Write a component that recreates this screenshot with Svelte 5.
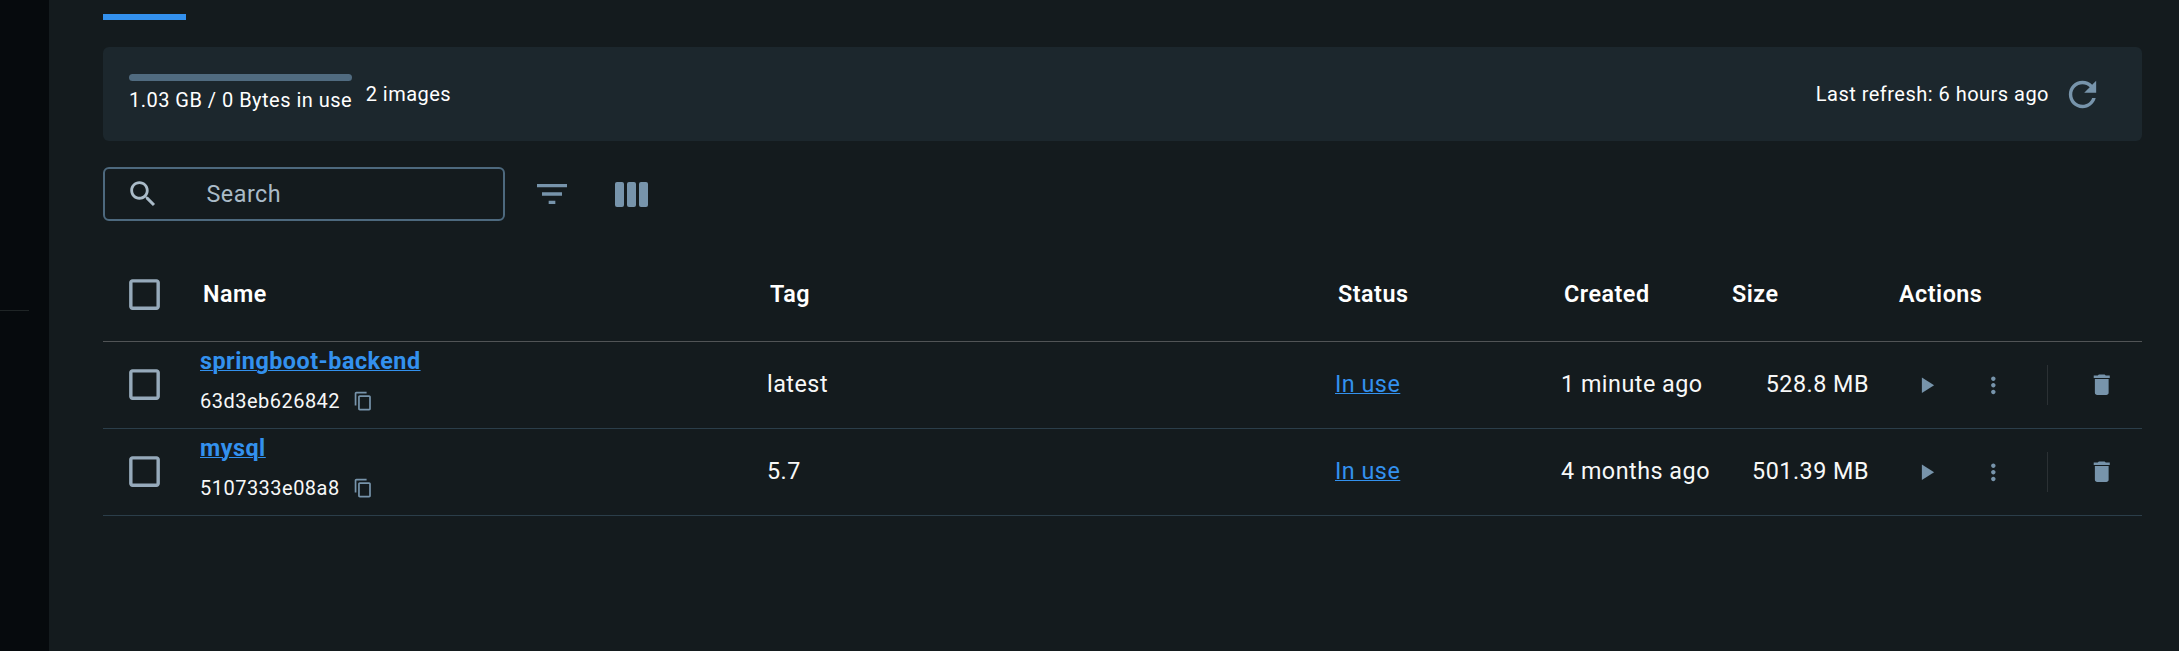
<script>
  const images = [
    { name: 'springboot-backend', id: '63d3eb626842', tag: 'latest', status: 'In use', created: '1 minute ago', size: '528.8 MB' },
    { name: 'mysql', id: '5107333e08a8', tag: '5.7', status: 'In use', created: '4 months ago', size: '501.39 MB' }
  ];
  const columns = ['Name', 'Tag', 'Status', 'Created', 'Size', 'Actions'];

  const icons = {
    search: 'M15.5 14h-.79l-.28-.27C15.41 12.59 16 11.11 16 9.5 16 5.91 13.09 3 9.5 3S3 5.91 3 9.5 5.91 16 9.5 16c1.61 0 3.09-.59 4.23-1.57l.27.28v.79l5 4.99L20.49 19l-4.99-5zm-6 0C7.01 14 5 11.99 5 9.5S7.01 5 9.5 5 14 7.01 14 9.5 11.99 14 9.5 14z',
    refresh: 'M17.65 6.35C16.2 4.9 14.21 4 12 4c-4.42 0-7.99 3.58-7.99 8s3.57 8 7.99 8c3.73 0 6.84-2.55 7.73-6h-2.08c-.82 2.33-3.04 4-5.65 4-3.31 0-6-2.69-6-6s2.69-6 6-6c1.66 0 3.14.69 4.22 1.78L13 11h7V4l-2.35 2.35z',
    filter: 'M10 18h4v-2h-4v2zM3 6v2h18V6H3zm3 7h12v-2H6v2z',
    box: 'M19 5v14H5V5h14m0-2H5c-1.1 0-2 .9-2 2v14c0 1.1.9 2 2 2h14c1.1 0 2-.9 2-2V5c0-1.1-.9-2-2-2z',
    copy: 'M16 1H4c-1.1 0-2 .9-2 2v14h2V3h12V1zm3 4H8c-1.1 0-2 .9-2 2v14c0 1.1.9 2 2 2h11c1.1 0 2-.9 2-2V7c0-1.1-.9-2-2-2zm0 16H8V7h11v14z',
    play: 'M8 5v14l11-7z',
    more: 'M12 8c1.1 0 2-.9 2-2s-.9-2-2-2-2 .9-2 2 .9 2 2 2zm0 2c-1.1 0-2 .9-2 2s.9 2 2 2 2-.9 2-2-.9-2-2-2zm0 6c-1.1 0-2 .9-2 2s.9 2 2 2 2-.9 2-2-.9-2-2-2z',
    trash: 'M6 19c0 1.1.9 2 2 2h8c1.1 0 2-.9 2-2V7H6v12zM19 4h-3.5l-1-1h-5l-1 1H5v2h14V4z'
  };
</script>

{#snippet icon(name, size)}
  <svg class="icon" width={size} height={size} viewBox="0 0 24 24" aria-hidden="true"><path d={icons[name]} /></svg>
{/snippet}

<div class="app">
  <aside class="sidebar"><div class="rule"></div></aside>
  <main>
    <div class="tab"></div>

    <section class="summary">
      <div class="usage">
        <div class="bar"></div>
        <span>1.03 GB / 0 Bytes in use</span>
      </div>
      <span class="count">2 images</span>
      <span class="last">Last refresh: 6 hours ago</span>
      <div class="refresh">{@render icon('refresh', 41)}</div>
    </section>

    <div class="tools">
      <div class="search">
        {@render icon('search', 34)}
        <span>Search</span>
      </div>
      <div class="filter">{@render icon('filter', 40)}</div>
      <div class="cols"><i></i><i></i><i></i></div>
    </div>

    <div class="table">
      <div class="row head">
        <div class="check">{@render icon('box', 41)}</div>
        {#each columns as c}<div class="th">{c}</div>{/each}
      </div>
      {#each images as img}
        <div class="row">
          <div class="check">{@render icon('box', 41)}</div>
          <div class="name">
            <span class="link strong">{img.name}</span>
            <div class="hash"><span>{img.id}</span>{@render icon('copy', 20.4)}</div>
          </div>
          <div class="td">{img.tag}</div>
          <div class="td"><span class="link">{img.status}</span></div>
          <div class="td">{img.created}</div>
          <div class="td size">{img.size}</div>
          <div class="actions">
            {@render icon('play', 26.67)}
            {@render icon('more', 26.67)}
            <div class="divider"></div>
            {@render icon('trash', 27.5)}
          </div>
        </div>
      {/each}
    </div>
  </main>
</div>

<style>
  :global(body) { margin: 0; background: #141b1e; }
  .app {
    display: flex;
    height: 651px;
    overflow: hidden;
    background: #141b1e;
    color: #fff;
    font-family: Roboto, sans-serif;
    font-size: 23.33px;
    letter-spacing: 0.5px;
    white-space: nowrap;
  }
  .icon { display: block; flex: none; fill: #7794ab; }
  .sidebar { width: 49px; flex: none; background: #060a0d; }
  .rule { width: 29px; height: 1px; margin-top: 310px; background: #1f2526; }
  main { flex: 1; padding: 14px 37px 0 54px; }
  .tab { width: 83px; height: 6px; background: #3391ee; }

  .summary {
    display: flex;
    align-items: center;
    box-sizing: border-box;
    height: 94px;
    margin-top: 27px;
    padding: 0 39.5px 0 26px;
    border-radius: 6px;
    background: #1c272d;
    font-size: 20px;
    letter-spacing: 0.48px;
    line-height: 24px;
  }
  .usage { display: flex; flex-direction: column; gap: 7px; margin-top: -3px; }
  .bar { height: 7px; border-radius: 4px; background: #506b80; }
  .count { margin-left: 13.5px; }
  .last { margin-left: auto; }
  .refresh { margin-left: 12.5px; }

  .tools { display: flex; align-items: center; height: 54px; margin-top: 26px; }
  .search {
    display: flex;
    align-items: center;
    box-sizing: border-box;
    width: 402px;
    height: 54px;
    padding-left: 21px;
    border: 2px solid #4d697e;
    border-radius: 6px;
    color: #aabbc8;
  }
  .search .icon { fill: #aabbc8; }
  .search span { margin-left: 46.5px; }
  .filter { margin-left: 27px; }
  .cols { display: flex; gap: 3px; margin-left: 43px; }
  .cols i { width: 9px; height: 25px; border-radius: 2px; background: #7794ab; }

  .table { margin-top: 26px; }
  .row {
    display: grid;
    grid-template-columns: 97px 567px 568px 226px 168px 140px 1fr;
    align-items: center;
    box-sizing: border-box;
    height: 87px;
    border-bottom: 1px solid #2b3e4a;
  }
  .row.head { height: 95px; border-bottom-color: #515456; }
  .th { padding-left: 3px; font-weight: 600; }
  .th:last-child { padding-left: 30px; }
  .check { padding-left: 21px; }
  .row:not(.head) .check { margin-top: -1px; }
  .check .icon { fill: #96aabb; }
  .td { margin-top: -2px; color: #f7f8f8; }
  .size { text-align: right; }
  .link { color: #3391ee; text-decoration: underline; text-decoration-thickness: 1px; text-underline-offset: 1px; }
  .strong { display: block; font-weight: 700; line-height: 28px; }
  .name { display: flex; flex-direction: column; gap: 14px; margin-top: -10px; }
  .hash { display: flex; align-items: center; gap: 13px; font-size: 20px; letter-spacing: 0.48px; line-height: 24px; color: #f7f8f8; }
  .actions { display: flex; align-items: center; padding-left: 44px; }
  .actions .icon:nth-child(2) { margin-left: 40px; }
  .divider { width: 1px; height: 40px; margin: 0 40px 0 41px; background: #2b3134; }
</style>
